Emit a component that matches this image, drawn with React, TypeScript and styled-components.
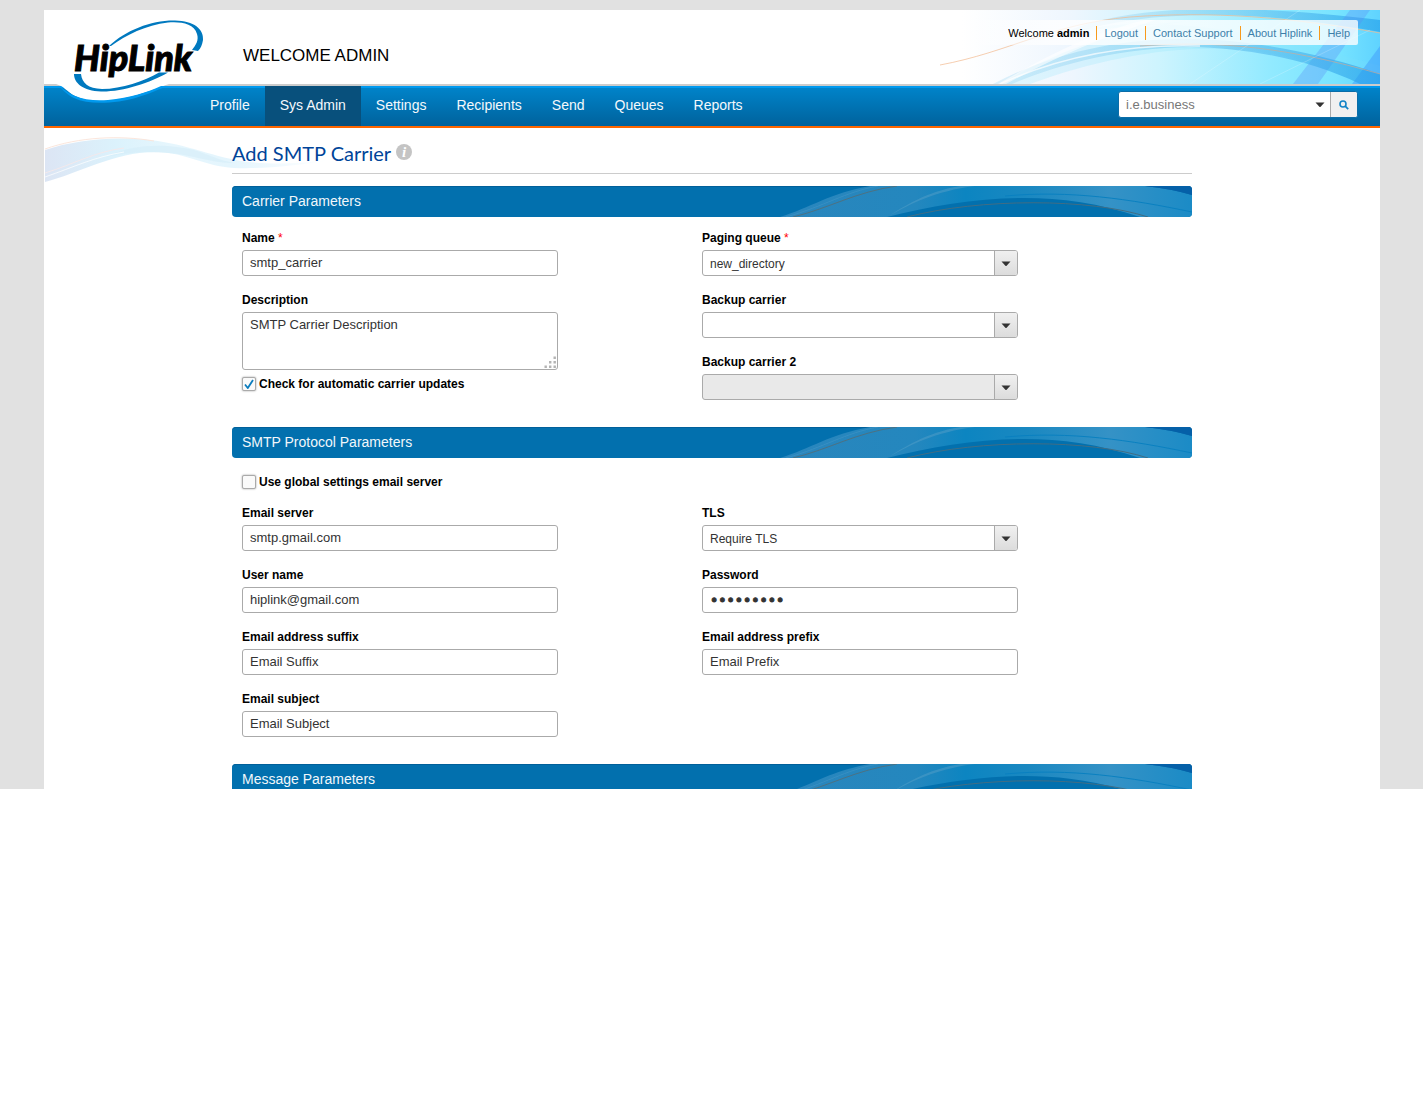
import React, { useId, useState } from "react";
import styled, { createGlobalStyle } from "styled-components";

const sans = `"Liberation Sans", Arial, Helvetica, sans-serif`;

const GlobalStyle = createGlobalStyle`
  *, *::before, *::after { box-sizing: border-box; }
  body { margin: 0; background: #fff; color: #000; font-family: ${sans}; font-size: 12px; }
  input, textarea, select, button { font-family: inherit; margin: 0; }
`;

/* ---------- page frame ---------- */

const Page = styled.div`
  background: #e1e1e1;
  padding: 10px 43px 0 44px;
  overflow: hidden;
`;

const Sheet = styled.div`
  background: #fff;
`;

/* ---------- header ---------- */

const Header = styled.header`
  position: relative;
  display: flex;
  height: 76px;
  border-bottom: 2px solid #ccc;
`;

const HeaderArt = styled.svg`
  position: absolute;
  top: 0;
  right: 0;
  width: 440px;
  height: 74px;
`;

const LogoLink = styled.a`
  position: relative;
  z-index: 2;
  display: block;
  flex: none;
  width: 199px;
  height: 96px;

  svg {
    display: block;
  }
`;

const WelcomeTitle = styled.p`
  margin: 0;
  padding-top: 36px;
  font-size: 17px;
  line-height: 20px;
  white-space: nowrap;
`;

const AccountBar = styled.div`
  position: relative;
  display: flex;
  align-items: center;
  height: 25px;
  margin: 10px 22px 0 auto;
  padding: 0 1px 0 48px;
  font-size: 11px;
  line-height: 14px;
  white-space: nowrap;
  border-radius: 2px;
  background: linear-gradient(90deg, rgba(255, 255, 255, 0), rgba(255, 255, 255, 0.78) 25%);
`;

const AccountText = styled.span`
  padding: 0 7px;
`;

const AccountLink = styled.a`
  padding: 0 7px;
  color: #3d7fa9;
  text-decoration: none;
  border-left: 1px solid #f79a1c;
`;

/* ---------- navigation ---------- */

const NavBar = styled.div`
  display: flex;
  justify-content: space-between;
  height: 42px;
  padding: 0 22px 0 151px;
  border-bottom: 2px solid #f60;
  background: linear-gradient(#09e 0, #09e 2px, #0083c9 2px, #00629c 100%);
`;

const NavList = styled.ul`
  display: flex;
  margin: 0;
  padding: 0;
  list-style: none;
`;

const NavLink = styled.a<{ $active?: boolean }>`
  display: block;
  padding: 0 15px;
  color: #f4f9fc;
  font-size: 14px;
  line-height: 38px;
  height: 40px;
  text-decoration: none;
  background: ${(p) => (p.$active ? "#08507c" : "transparent")};
`;

const Search = styled.form`
  display: flex;
  width: 240px;
  height: 27px;
  margin-top: 5px;
  overflow: hidden;
  border: 1px solid #0a6da8;
  border-radius: 3px;
  background: #fff;
`;

const SearchInput = styled.input`
  flex: 1;
  min-width: 0;
  padding: 0 7px;
  border: 0;
  outline: 0;
  font-size: 13px;
  background: transparent;

  &::placeholder {
    color: #777;
    opacity: 1;
  }
`;

const SearchButton = styled.button<{ $tinted?: boolean }>`
  display: grid;
  place-items: center;
  width: ${(p) => (p.$tinted ? "27px" : "20px")};
  padding: 0;
  border: 0;
  border-left: ${(p) => (p.$tinted ? "1px solid #aaa" : "0")};
  background: ${(p) => (p.$tinted ? "#f0f0f0" : "transparent")};
`;

/* ---------- content ---------- */

const Main = styled.main`
  position: relative;
`;

const MainArt = styled.svg`
  position: absolute;
  top: 0;
  left: 0;
`;

const Content = styled.div`
  position: relative;
  max-width: 960px;
  margin: 0 auto;
`;

const TitleRow = styled.div`
  display: flex;
  align-items: center;
  gap: 5px;
  height: 46px;
  margin-bottom: 12px;
  border-bottom: 1px solid #ccc;
`;

const Title = styled.h1`
  margin: 0;
  padding-top: 5px;
  color: #049;
  font-family: Lato, "Open Sans", sans-serif;
  font-size: 20px;
  font-weight: 400;
  line-height: 24px;
`;

const InfoButton = styled.button`
  width: 16px;
  height: 16px;
  padding: 0;
  margin-top: 2px;
  border: 0;
  border-radius: 50%;
  background: #c4c4c4;
  color: #fff;

  && {
    font-family: "Liberation Serif", "Times New Roman", serif;
  }
  font-size: 15px;
  font-style: italic;
  font-weight: 700;
  line-height: 16px;
`;

const Banner = styled.div`
  position: relative;
  height: 31px;
  overflow: hidden;
  border-radius: 4px;
  background: #0270ae;
  box-shadow: inset 0 1px 0 #01609a;
`;

const BannerArt = styled.svg`
  position: absolute;
  top: 0;
  right: 0;
  width: 412px;
  height: 31px;
`;

const BannerTitle = styled.h2`
  margin: 0;
  padding: 0 10px;
  color: #f1f7fb;
  font-size: 14px;
  font-weight: 400;
  line-height: 31px;
`;

const Columns = styled.div`
  display: grid;
  grid-template-columns: 460px minmax(0, 316px);
  align-items: start;
  padding: 13px 10px 27px;
`;

const Column = styled.div`
  display: flex;
  flex-direction: column;
  gap: 16px;
`;

const Field = styled.div`
  display: flex;
  flex-direction: column;
  gap: 4px;
  width: 316px;
`;

const Label = styled.label`
  font-weight: 700;
  line-height: 16px;
`;

const Required = styled.span`
  color: #f00;
  font-weight: 400;
`;

const TextInput = styled.input`
  height: 26px;
  padding: 0 7px 1px;
  border: 1px solid #aaa;
  border-radius: 3px;
  background: #fff;
  color: #333;
  font-size: 13px;

  &&[type="password"] {
    padding-bottom: 0;
    font-family: "DejaVu Sans", sans-serif;
    font-size: 14px;
    -webkit-text-stroke: 1px #333;
  }
`;

const Stack = styled.div`
  display: grid;

  > * {
    grid-area: 1 / 1;
  }
`;

const SelectBox = styled.select`
  appearance: none;
  height: 26px;
  padding: 1px 30px 0 7px;
  border: 1px solid #aaa;
  border-radius: 3px;
  background: #fff;
  color: #333;
  font-size: 12px;

  &:disabled {
    background: #e9e9e9;
    opacity: 1;
  }
`;

const SelectArrow = styled.span`
  display: grid;
  place-items: center;
  justify-self: end;
  align-self: center;
  width: 23px;
  height: 24px;
  padding-top: 1px;
  margin-right: 1px;
  border-left: 1px solid #aaa;
  border-radius: 0 2px 2px 0;
  background: linear-gradient(#f0f0f0, #dcdcdc);
  pointer-events: none;
`;

const TextArea = styled.textarea`
  height: 58px;
  padding: 4px 7px;
  border: 1px solid #aaa;
  border-radius: 3px;
  resize: none;
  color: #333;
  font-size: 13px;
  line-height: 15px;
`;

const Grip = styled.svg`
  align-self: end;
  justify-self: end;
  margin: 1px;
  pointer-events: none;
`;

const CheckRow = styled.div<{ $spaced?: boolean }>`
  display: flex;
  align-items: center;
  gap: 3px;
  height: 16px;
  margin: ${(p) => (p.$spaced ? "3px 0 -1px" : "-10px 0 0")};
`;

const CheckInput = styled.input`
  appearance: none;
  width: 14px;
  height: 14px;
  border: 1px solid #aaa;
  border-radius: 2px;
  background: #fafafa;
  box-shadow: 0 0 2px #999;
`;

const CheckMark = styled.svg`
  place-self: center;
  pointer-events: none;
`;

const CutBanner = styled.div`
  margin-bottom: -6px;
`;

/* ---------- parts ---------- */

const Caret = () => (
  <svg width="10" height="6" viewBox="0 0 10 6" aria-hidden="true">
    <path d="M0.5 0.5h9L5.6 4.8Q5 5.3 4.4 4.8Z" fill="#333" />
  </svg>
);

const Logo = () => (
  <svg width="170" height="96" viewBox="0 0 170 96" role="img" aria-label="HipLink">
    <path
      d="M12 74 C20 76 22 81 31 86 C42 91 52 92 62 91 C84 89 104 82 117 77 Q121 75 125 74 Z"
      fill="#fff"
    />
    <path
      d="M15 76 C20 79 22 82 30 85.500 C40 90 52 91 64 90 C86 88 104 82 117 76 H124 C112 80 98 88 75 91.500 C56 94 41 93 30 88 C23 84.500 19 80 15 76Z"
      fill="#09e"
    />
    <path
      d="M65 36 C82 20 108 10 131 10.500 C150 11 160 19 159 30 C158 35 157 38 154 41 L148 40 C152 35 155 30 153 24 C150 13 136 11.500 124 12.500 C102 15 82 25 67 36Z"
      fill="#0079bf"
    />
    <path
      d="M30 64 H37 C38 73 44 78.500 58 79 C78 79 100 71 115 62.500 L124 62.500 C106 73 78 82 57 81.500 C39 81 30 73 30 64Z"
      fill="#0079bf"
    />
    <text
      x="30"
      y="61"
      fontFamily="Lato, 'Liberation Sans', sans-serif"
      fontSize="36"
      fontStyle="italic"
      fontWeight="900"
      fill="#000"
      stroke="#000"
      strokeWidth="1"
    >
      HipLink
    </text>
  </svg>
);

const HeaderWaves = () => (
  <HeaderArt viewBox="0 0 440 74" preserveAspectRatio="none" aria-hidden="true">
    <defs>
      <linearGradient id="sky" x1="0" x2="1" y1="0" y2="0">
        <stop offset="0.05" stopColor="#fff" />
        <stop offset="0.3" stopColor="#eef6fe" />
        <stop offset="0.5" stopColor="#cdf4fe" />
        <stop offset="0.75" stopColor="#92eaff" />
        <stop offset="0.9" stopColor="#78e4ff" />
        <stop offset="1" stopColor="#5fd3ff" />
      </linearGradient>
      <linearGradient id="band" x1="0" x2="1" y1="0" y2="0">
        <stop offset="0" stopColor="#9ad6f2" stopOpacity="0.3" />
        <stop offset="0.5" stopColor="#6ec4ee" stopOpacity="0.5" />
        <stop offset="1" stopColor="#1e9be8" stopOpacity="0.6" />
      </linearGradient>
    </defs>
    <rect width="440" height="74" fill="url(#sky)" />
    <path d="M130 22 C190 8 280 8 440 56 V74 H420 C330 24 210 30 90 74 H60 C110 46 170 18 260 10Z" fill="#7fe0fb" opacity="0.2" />
    <path d="M130 20 C190 -4 290 -8 440 10 V22 C320 0 210 -2 130 24Z" fill="url(#band)" />
    <path d="M410 0 H430 L378 74 H353Z" fill="#5b8cf5" opacity="0.32" />
    <path d="M440 36 V74 H412Z" fill="#3a8dfa" opacity="0.4" />
    <path d="M53 74 C130 34 210 24 290 31 C350 37 400 50 440 64 V74 H420 C370 50 310 38 250 37 C180 38 120 54 72 74Z" fill="url(#band)" />
    <path d="M58 74 C110 44 150 24 205 10 L215 10 C160 28 110 50 66 74Z" fill="#fff" opacity="0.6" />
    <path d="M60 74 C130 42 200 34 260 36" fill="none" stroke="#fff" strokeWidth="1.500" opacity="0.7" />
    <path d="M0 55 C70 42 110 14 190 7 C270 1 350 7 440 23" fill="none" stroke="#f2b98f" strokeWidth="1" opacity="0.7" />
    <path d="M200 36 C280 30 350 38 440 64" fill="none" stroke="#d9a98d" strokeWidth="1" opacity="0.6" />
    <path d="M320 74 L430 20 M360 0 L250 74" stroke="#fff" strokeWidth="1" opacity="0.2" />
  </HeaderArt>
);

const PaleWave = () => (
  <MainArt width="290" height="58" viewBox="0 0 290 58" aria-hidden="true">
    <defs>
      <linearGradient id="pale" x1="0" x2="1" y1="0" y2="0">
        <stop offset="0" stopColor="#dce5f4" />
        <stop offset="0.25" stopColor="#dbf2fc" />
        <stop offset="0.45" stopColor="#e6f6fd" />
        <stop offset="0.65" stopColor="#e4f5fd" />
        <stop offset="1" stopColor="#fff" />
      </linearGradient>
    </defs>
    <path
      d="M1 22 C30 12 70 8 105 12 C145 16 170 30 205 34 C235 37 260 35 286 32 C250 38 220 41 190 40 C160 38 145 26 115 24 C75 22 35 45 1 54Z"
      fill="url(#pale)"
    />
    <path d="M62 29 C90 15 125 16 150 22 C165 27 175 32 190 35 C165 35 150 27 125 25 C100 23 80 25 62 29Z" fill="#d3edf9" opacity="0.6" />
    <path d="M1 21 C35 9 75 7 110 13" fill="none" stroke="#fbe6dc" />
    <path d="M1 45 C30 36 50 24 80 20" fill="none" stroke="#f3e9ec" />
    <path d="M1 49 C30 39 50 29 80 24" fill="none" stroke="#fff" opacity="0.7" />
  </MainArt>
);

const BannerWaves = () => {
  const id = useId();
  return (
    <BannerArt viewBox="0 0 412 31" aria-hidden="true">
      <defs>
        <linearGradient id={id} x1="0" x2="1" y1="0" y2="0">
          <stop offset="0" stopColor="#2a86bd" />
          <stop offset="0.33" stopColor="#2487be" />
          <stop offset="0.45" stopColor="#0c85c1" />
          <stop offset="0.6" stopColor="#1a88c1" />
          <stop offset="0.8" stopColor="#3592c6" />
          <stop offset="1" stopColor="#1b8bc6" />
        </linearGradient>
      </defs>
      <path
        d="M0 31 C30 22 50 7 90 0 H365 Q392 3 412 9 V31 H360 C320 17 280 12 245 12 C200 12 150 20 107 31Z"
        fill={`url(#${id})`}
      />
      <path d="M107 31 C130 18 155 5 195 0 H180 C145 6 125 20 107 31Z" fill="#4b9bc6" opacity="0.6" />
      <path d="M365 0 H412 V9 Q392 3 365 0Z" fill="#0560a8" />
      <path d="M13 31 C50 22 75 6 117 0" fill="none" stroke="#4d7182" />
      <path d="M6 31 C45 20 65 6 98 0" fill="none" stroke="#4295c4" opacity="0.6" />
      <path d="M127 31 C200 12 310 12 368 31" fill="none" stroke="#416d84" />
      <path d="M225 10 C290 4 350 13 412 26" fill="none" stroke="#0a80c0" />
    </BannerArt>
  );
};

const SectionBanner = ({ title }: { title: string }) => (
  <Banner>
    <BannerWaves />
    <BannerTitle>{title}</BannerTitle>
  </Banner>
);

const InputField = ({
  label,
  value,
  type = "text",
  required,
}: {
  label: string;
  value: string;
  type?: string;
  required?: boolean;
}) => {
  const id = useId();
  return (
    <Field>
      <Label htmlFor={id}>
        {label} {required && <Required>*</Required>}
      </Label>
      <TextInput id={id} type={type} defaultValue={value} />
    </Field>
  );
};

const SelectField = ({
  label,
  value,
  required,
  disabled,
}: {
  label: string;
  value: string;
  required?: boolean;
  disabled?: boolean;
}) => {
  const id = useId();
  return (
    <Field>
      <Label htmlFor={id}>
        {label} {required && <Required>*</Required>}
      </Label>
      <Stack>
        <SelectBox id={id} defaultValue={value} disabled={disabled}>
          <option value={value}>{value}</option>
        </SelectBox>
        <SelectArrow>
          <Caret />
        </SelectArrow>
      </Stack>
    </Field>
  );
};

const CheckField = ({ label, initial = false, spaced }: { label: string; initial?: boolean; spaced?: boolean }) => {
  const id = useId();
  const [checked, setChecked] = useState(initial);
  return (
    <CheckRow $spaced={spaced}>
      <Stack>
        <CheckInput id={id} type="checkbox" checked={checked} onChange={(e) => setChecked(e.target.checked)} />
        {checked && (
          <CheckMark width="10" height="10" viewBox="0 0 10 10" aria-hidden="true">
            <path d="M1 5.500 L3.800 9 L9 1" fill="none" stroke="#0b7cbd" strokeWidth="1.800" />
          </CheckMark>
        )}
      </Stack>
      <Label htmlFor={id}>{label}</Label>
    </CheckRow>
  );
};

const DescriptionField = () => (
  <Field>
    <Label htmlFor="description">Description</Label>
    <Stack>
      <TextArea id="description" defaultValue="SMTP Carrier Description" />
      <Grip width="13" height="13" viewBox="0 0 13 13" aria-hidden="true">
        <path
          d="M9.500 .5h2.400v2.400h-2.400z M5 5h2.400v2.400h-2.400z M9.500 5h2.400v2.400h-2.400z M.5 9.500h2.400v2.400h-2.400z M5 9.500h2.400v2.400h-2.400z M9.500 9.500h2.400v2.400h-2.400z"
          fill="#b4b4b4"
        />
      </Grip>
    </Stack>
  </Field>
);

const navItems = ["Profile", "Sys Admin", "Settings", "Recipients", "Send", "Queues", "Reports"];
const accountItems = ["Logout", "Contact Support", "About Hiplink", "Help"];

export default function App() {
  return (
    <>
      <GlobalStyle />
      <Page>
        <Sheet>
          <Header>
            <HeaderWaves />
            <LogoLink href="#">
              <Logo />
            </LogoLink>
            <WelcomeTitle>WELCOME ADMIN</WelcomeTitle>
            <AccountBar>
              <AccountText>
                Welcome <b>admin</b>
              </AccountText>
              {accountItems.map((item) => (
                <AccountLink key={item} href="#">
                  {item}
                </AccountLink>
              ))}
            </AccountBar>
          </Header>

          <NavBar>
            <nav>
              <NavList>
                {navItems.map((item) => (
                  <li key={item}>
                    <NavLink href="#" $active={item === "Sys Admin"}>
                      {item}
                    </NavLink>
                  </li>
                ))}
              </NavList>
            </nav>
            <Search role="search" onSubmit={(e) => e.preventDefault()}>
              <SearchInput aria-label="Search" placeholder="i.e.business" />
              <SearchButton type="button" aria-label="Search options">
                <Caret />
              </SearchButton>
              <SearchButton type="submit" aria-label="Search" $tinted>
                <svg width="10" height="10" viewBox="0 0 10 10" aria-hidden="true">
                  <circle cx="4" cy="4" r="3" fill="none" stroke="#1283c6" strokeWidth="1.600" />
                  <path d="M6.200 6.200 L9.200 9.200" stroke="#1283c6" strokeWidth="1.800" />
                </svg>
              </SearchButton>
            </Search>
          </NavBar>

          <Main>
            <PaleWave />
            <Content>
              <TitleRow>
                <Title>Add SMTP Carrier</Title>
                <InfoButton type="button" aria-label="Information">
                  i
                </InfoButton>
              </TitleRow>

              <SectionBanner title="Carrier Parameters" />
              <Columns>
                <Column>
                  <InputField label="Name" value="smtp_carrier" required />
                  <DescriptionField />
                  <CheckField label="Check for automatic carrier updates" initial />
                </Column>
                <Column>
                  <SelectField label="Paging queue" value="new_directory" required />
                  <SelectField label="Backup carrier" value="" />
                  <SelectField label="Backup carrier 2" value="" disabled />
                </Column>
              </Columns>

              <SectionBanner title="SMTP Protocol Parameters" />
              <Columns>
                <Column>
                  <CheckField label="Use global settings email server" spaced />
                  <InputField label="Email server" value="smtp.gmail.com" />
                  <InputField label="User name" value="hiplink@gmail.com" />
                  <InputField label="Email address suffix" value="Email Suffix" />
                  <InputField label="Email subject" value="Email Subject" />
                </Column>
                <Column>
                  <CheckRow $spaced />
                  <SelectField label="TLS" value="Require TLS" />
                  <InputField label="Password" value="password1" type="password" />
                  <InputField label="Email address prefix" value="Email Prefix" />
                </Column>
              </Columns>

              <CutBanner>
                <SectionBanner title="Message Parameters" />
              </CutBanner>
            </Content>
          </Main>
        </Sheet>
      </Page>
    </>
  );
}
